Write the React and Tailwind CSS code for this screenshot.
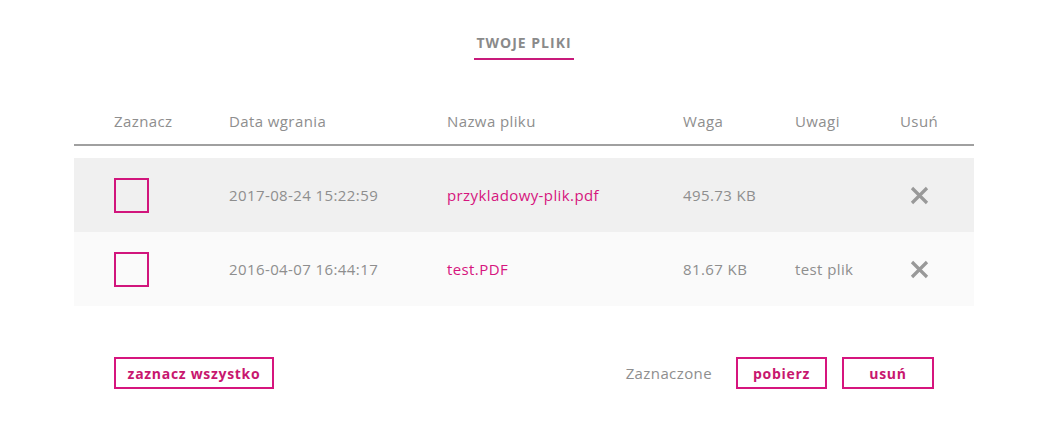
import React from "react"

const files = [
  { date: "2017-08-24 15:22:59", name: "przykladowy-plik.pdf", size: "495.73 KB", note: "", bg: "bg-[#f0f0f0]" },
  { date: "2016-04-07 16:44:17", name: "test.PDF", size: "81.67 KB", note: "test plik", bg: "bg-[#fafafa]" },
]

const cols = "grid grid-cols-[115px_218px_236px_112px_105px_1fr] pl-[40px]"

function Cross() {
  return (
    <svg width="19" height="19" viewBox="0 0 19 19" className="ml-[10px]">
      <path d="M2 2 L17 17 M17 2 L2 17" stroke="#999" strokeWidth="3.2" />
    </svg>
  )
}

export default function App() {
  return (
    <div className="min-h-screen bg-white font-['Open_Sans',sans-serif] text-[#8e8e8e]">
      <div className="w-[900px] ml-[74px] pt-[35px]">
        <div className="flex justify-center">
          <h2 className="w-[100px] text-center border-b-2 border-[#c81a7b] pb-[7px] text-[14px] leading-[16px] font-bold tracking-[1px] text-[#8a8a8a]">
            TWOJE PLIKI
          </h2>
        </div>
        <div className={`${cols} mt-[51px] pb-[13px] border-b-2 border-[#a0a0a0] text-[15px] leading-[20px] tracking-[0.4px]`}>
          <span>Zaznacz</span>
          <span>Data wgrania</span>
          <span>Nazwa pliku</span>
          <span>Waga</span>
          <span>Uwagi</span>
          <span>Usuń</span>
        </div>
        <div className="mt-[12px]">
          {files.map((f) => (
            <div key={f.name} className={`${cols} h-[74px] items-center text-[15px] tracking-[0.4px] ${f.bg}`}>
              <span className="w-[35px] h-[35px] border-2 border-[#d1157c]"></span>
              <span>{f.date}</span>
              <a href="#" className="text-[#d6157e]">{f.name}</a>
              <span>{f.size}</span>
              <span>{f.note}</span>
              <Cross />
            </div>
          ))}
        </div>
        <div className="flex items-center justify-between px-[40px] mt-[51px]">
          <button className="w-[160px] h-[32px] border-2 border-[#d6157e] text-[#c8176f] text-[14px] font-bold tracking-[0.7px]">
            zaznacz wszystko
          </button>
          <div className="flex items-center">
            <span className="text-[15px] tracking-[0.4px] mr-[24px]">Zaznaczone</span>
            <button className="w-[91px] h-[32px] border-2 border-[#d6157e] text-[#c8176f] text-[14px] font-bold tracking-[0.7px]">
              pobierz
            </button>
            <button className="w-[92px] h-[32px] ml-[15px] border-2 border-[#d6157e] text-[#c8176f] text-[14px] font-bold tracking-[0.7px]">
              usuń
            </button>
          </div>
        </div>
      </div>
    </div>
  )
}
